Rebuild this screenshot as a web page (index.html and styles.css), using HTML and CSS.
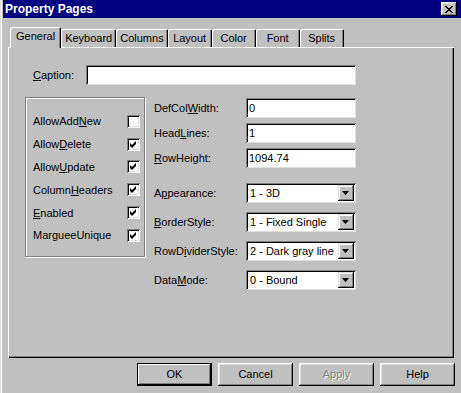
FILE: index.html
```html
<!DOCTYPE html>
<html lang="en">
<head>
    <meta charset="UTF-8">
    <meta name="viewport" content="width=device-width, initial-scale=1.0">
    <title>Property Pages</title>
    <link rel="stylesheet" href="styles.css">
</head>
<body>
    <div class="window">
        <div class="titlebar">
            <span class="title">Property Pages</span>
            <div class="close-btn">
                <svg width="8" height="7" viewBox="0 0 8 7">
                    <path d="M0 0h2v1h1v1h2v-1h1v-1h2v1h-1v1h-1v1h-1v1h1v1h1v1h1v1h-2v-1h-1v-1h-2v1h-1v1h-2v-1h1v-1h1v-1h1v-1h-1v-1h-1v-1h-1z" fill="#000"/>
                </svg>
            </div>
        </div>

        <div class="tabs">
            <div class="tab active">General</div>
            <div class="tab">Keyboard</div>
            <div class="tab">Columns</div>
            <div class="tab">Layout</div>
            <div class="tab">Color</div>
            <div class="tab">Font</div>
            <div class="tab">Splits</div>
        </div>

        <div class="panel">
            <div class="caption-row">
                <span class="caption-label"><u>C</u>aption:</span>
                <div class="textbox caption-box"></div>
            </div>

            <div class="content">
                <div class="groupbox">
                    <div class="check-row"><span class="check-label">AllowAdd<u>N</u>ew</span><span class="checkbox"></span></div>
                    <div class="check-row"><span class="check-label">Allow<u>D</u>elete</span><span class="checkbox checked"></span></div>
                    <div class="check-row"><span class="check-label">Allow<u>U</u>pdate</span><span class="checkbox checked"></span></div>
                    <div class="check-row"><span class="check-label">Column<u>H</u>eaders</span><span class="checkbox checked"></span></div>
                    <div class="check-row"><span class="check-label"><u>E</u>nabled</span><span class="checkbox checked"></span></div>
                    <div class="check-row"><span class="check-label">MargueeUnique</span><span class="checkbox checked"></span></div>
                </div>

                <div class="fields">
                    <div class="field">
                        <span class="field-label">DefCol<u>W</u>idth:</span>
                        <div class="textbox">0</div>
                    </div>
                    <div class="field">
                        <span class="field-label">Head<u>L</u>ines:</span>
                        <div class="textbox">1</div>
                    </div>
                    <div class="field">
                        <span class="field-label"><u>R</u>owHeight:</span>
                        <div class="textbox">1094.74</div>
                    </div>

                    <div class="combos">
                        <div class="field">
                            <span class="field-label">A<u>p</u>pearance:</span>
                            <div class="combo"><span class="combo-text">1 - 3D</span><span class="drop-btn"></span></div>
                        </div>
                        <div class="field">
                            <span class="field-label"><u>B</u>orderStyle:</span>
                            <div class="combo"><span class="combo-text">1 - Fixed Single</span><span class="drop-btn"></span></div>
                        </div>
                        <div class="field">
                            <span class="field-label">RowD<u>i</u>viderStyle:</span>
                            <div class="combo"><span class="combo-text">2 - Dark gray line</span><span class="drop-btn"></span></div>
                        </div>
                        <div class="field">
                            <span class="field-label">Data<u>M</u>ode:</span>
                            <div class="combo"><span class="combo-text">0 - Bound</span><span class="drop-btn"></span></div>
                        </div>
                    </div>
                </div>
            </div>
        </div>

        <div class="buttons">
            <div class="btn default">OK</div>
            <div class="btn">Cancel</div>
            <div class="btn disabled">Apply</div>
            <div class="btn">Help</div>
        </div>
    </div>
</body>
</html>
```

FILE: styles.css
```css
body {
    margin: 0;
    background: #c0c0c0;
    font-family: "Liberation Sans", Arial, sans-serif;
    font-size: 11px;
    color: #000;
    overflow: hidden;
}

.window {
    width: 461px;
    height: 393px;
    box-sizing: border-box;
    padding-left: 3px;
    background: #c0c0c0;
    box-shadow: inset 1px 0 #dfdfdf, inset 2px 0 #fff;
}

/* title bar */
.titlebar {
    height: 18px;
    background: #000080;
    display: flex;
    align-items: center;
    justify-content: space-between;
    padding: 0 4px 0 2px;
}

.title {
    color: #fff;
    font-weight: bold;
    font-size: 12px;
}

.close-btn {
    width: 16px;
    height: 14px;
    background: #c0c0c0;
    display: flex;
    align-items: center;
    justify-content: center;
    box-shadow: inset -1px -1px #000, inset 1px 1px #fff, inset -2px -2px #808080, inset 2px 2px #dfdfdf;
}

/* tabs */
.tabs {
    display: flex;
    align-items: flex-end;
    height: 21px;
    margin-top: 8px;
    padding-left: 7px;
}

.tab {
    height: 18px;
    line-height: 18px;
    padding: 0 4px;
    min-width: 36px;
    text-align: center;
    border-top-left-radius: 2px;
    border-top-right-radius: 2px;
    box-shadow: inset 1px 1px #fff, inset -1px 0 #000, inset -2px 0 #808080;
}

.tab.active {
    position: relative;
    z-index: 1;
    height: 21px;
    line-height: 19px;
    margin-bottom: -1px;
    padding: 0 6px;
    background: #c0c0c0;
}

/* tab panel */
.panel {
    margin-left: 5px;
    width: 446px;
    height: 311px;
    box-sizing: border-box;
    padding: 18px 0 0 17px;
    box-shadow: inset 1px 1px #fff, inset -1px -1px #000, inset -2px -2px #808080;
}

.caption-row {
    display: flex;
    align-items: center;
    padding-left: 8px;
}

.caption-label {
    width: 53px;
}

.textbox {
    width: 110px;
    height: 20px;
    box-sizing: border-box;
    padding: 4px 3px 0;
    background: #fff;
    box-shadow: inset 1px 1px #808080, inset -1px -1px #dfdfdf, inset 2px 2px #000, inset -2px -2px #fff;
}

.caption-box {
    width: 270px;
}

.content {
    display: flex;
    margin-top: 12px;
}

/* check group */
.groupbox {
    width: 120px;
    height: 160px;
    box-sizing: border-box;
    padding: 12px 0 0 7px;
    border: 1px solid #808080;
    box-shadow: inset 1px 1px #fff, 1px 1px #fff;
}

.check-row {
    display: flex;
    align-items: center;
    height: 22.8px;
}

.check-label {
    width: 94px;
}

.checkbox {
    width: 13px;
    height: 13px;
    background: #fff;
    box-shadow: inset 1px 1px #808080, inset -1px -1px #fff, inset 2px 2px #000, inset -2px -2px #dfdfdf;
}

.checkbox.checked {
    background: #fff url("data:image/svg+xml;utf8,<svg xmlns='http://www.w3.org/2000/svg' width='13' height='13'><path d='M9 3v3l-4 4-2-2v-3l2 2z' fill='black'/></svg>") no-repeat;
}

/* right column */
.fields {
    margin-left: 9px;
    padding-top: 1px;
    display: flex;
    flex-direction: column;
    gap: 5px;
}

.field {
    display: flex;
    align-items: center;
}

.field-label {
    width: 92px;
}

.combos {
    margin-top: 10px;
    display: flex;
    flex-direction: column;
    gap: 9px;
}

.combo {
    width: 110px;
    height: 20px;
    box-sizing: border-box;
    padding: 2px;
    display: flex;
    align-items: center;
    background: #fff;
    box-shadow: inset 1px 1px #808080, inset -1px -1px #dfdfdf, inset 2px 2px #000, inset -2px -2px #fff;
}

.combo-text {
    flex: 1;
    padding-left: 2px;
    white-space: nowrap;
}

.drop-btn {
    width: 16px;
    height: 16px;
    background: #c0c0c0 url("data:image/svg+xml;utf8,<svg xmlns='http://www.w3.org/2000/svg' width='16' height='16'><path d='M4 6h7l-3.5 4z' fill='black'/></svg>") no-repeat;
    box-shadow: inset -1px -1px #000, inset 1px 1px #dfdfdf, inset -2px -2px #808080, inset 2px 2px #fff;
}

/* bottom buttons */
.buttons {
    display: flex;
    justify-content: flex-end;
    gap: 6px;
    margin-top: 5px;
    padding-right: 6px;
}

.btn {
    width: 75px;
    height: 23px;
    line-height: 23px;
    text-align: center;
    box-sizing: border-box;
    box-shadow: inset -1px -1px #000, inset 1px 1px #fff, inset -2px -2px #808080, inset 2px 2px #dfdfdf;
}

.btn.default {
    box-shadow: inset 0 0 0 1px #000, inset -2px -2px #000, inset 2px 2px #fff, inset -3px -3px #808080;
}

.btn.disabled {
    color: #808080;
    text-shadow: 1px 1px #fff;
}
```
